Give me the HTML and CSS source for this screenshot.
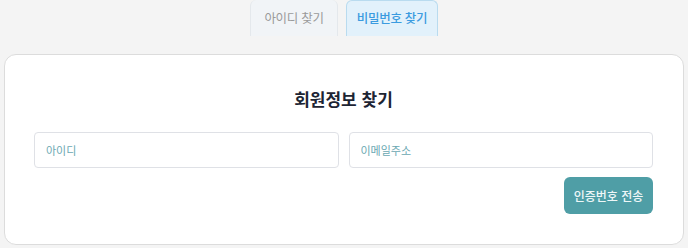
FILE: index.html
```html
<!DOCTYPE html>
<html lang="ko">
<head>
    <meta charset="UTF-8">
    <meta name="viewport" content="width=device-width, initial-scale=1.0">
    <title>회원정보 찾기</title>
    <link rel="stylesheet" href="styles.css">
</head>
<body>

<div class="tabs">
    <button type="button" class="tab tab-id">아이디 찾기</button>
    <button type="button" class="tab tab-pw active">비밀번호 찾기</button>
</div>

<div class="find-card">
    <h2>회원정보 찾기</h2>
    <form id="findForm">
        <div class="form-row">
            <input type="text" id="userId" name="userId" placeholder="아이디">
            <input type="email" id="email" name="email" placeholder="이메일주소">
        </div>
        <div class="form-actions">
            <button type="submit" class="send-btn">인증번호 전송</button>
        </div>
    </form>
</div>

</body>
</html>
```

FILE: styles.css
```css
body {
    font-family: "Noto Sans CJK KR", "Noto Sans", sans-serif;
    background-color: #f4f4f4;
    margin: 0;
    padding: 0 4px;
}
.tabs {
    display: flex;
    justify-content: center;
    gap: 8px;
    margin-bottom: 18px;
}
.tab {
    height: 36px;
    padding: 0 0 2px;
    background-color: #f1f4f7;
    border: 1px solid #e4e8ec;
    border-top: none;
    border-bottom: none;
    border-top-left-radius: 6px;
    border-top-right-radius: 6px;
    font-family: inherit;
    font-size: 12.5px;
    letter-spacing: -0.3px;
    color: #9a9a9a;
    cursor: pointer;
}
.tab-id {
    width: 88px;
}
.tab-pw {
    width: 92px;
}
.tab.active {
    background-color: #e2f1fb;
    border: 1px solid #b9dbef;
    border-bottom: none;
    color: #3b9be0;
    font-weight: 500;
}
.find-card {
    background-color: white;
    border: 1px solid #dcdcdc;
    border-radius: 12px;
    padding: 31px 30px 30px 29px;
}
.find-card h2 {
    margin: 0 0 20px;
    font-size: 17px;
    line-height: 26px;
    font-weight: 700;
    text-align: center;
    color: #1d2433;
}
.form-row {
    display: flex;
    gap: 10px;
}
.form-row input {
    flex: 1;
    min-width: 0;
    height: 36px;
    box-sizing: border-box;
    padding: 0 11px;
    border: 1px solid #dfe1e6;
    border-radius: 4px;
    font-family: inherit;
    font-size: 11px;
    color: #333;
}
.form-row input::placeholder {
    color: #6ba8b2;
}
.form-actions {
    display: flex;
    justify-content: flex-end;
    margin-top: 9px;
}
.send-btn {
    width: 89px;
    height: 37px;
    background-color: #4f9ea6;
    border: none;
    border-radius: 6px;
    font-family: inherit;
    font-size: 12px;
    font-weight: 500;
    color: #eef7f8;
    cursor: pointer;
}
```
